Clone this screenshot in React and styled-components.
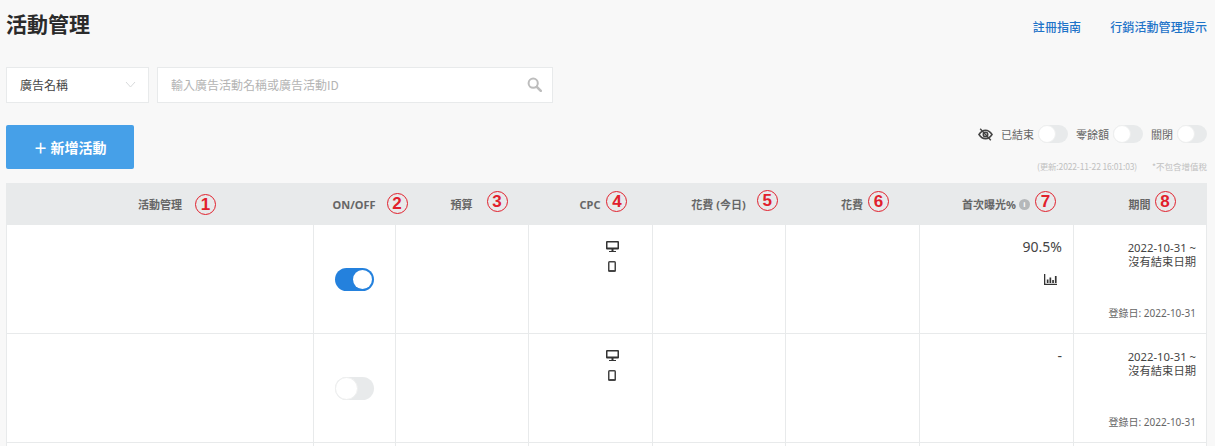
import React from "react";
import styled, { createGlobalStyle } from "styled-components";

const FONT = '"Noto Sans CJK TC", "Noto Sans", sans-serif';
const LATIN_FONT = '"Noto Sans", "Noto Sans CJK TC", sans-serif';
const COLUMNS = "306px 82px 133px 124px 133px 134px 154px 133px";

const columns = [
  { label: "活動管理", mark: "1", gap: 13, shift: 1 },
  { label: "ON/OFF", mark: "2", gap: 11, shift: 0 },
  { label: "預算", mark: "3", gap: 14, shift: -2 },
  { label: "CPC", mark: "4", gap: 6, shift: -2 },
  { label: "花費 (今日)", mark: "5", gap: 11, shift: -3 },
  { label: "花費", mark: "6", gap: 5, shift: -2 },
  { label: "首次曝光%", mark: "7", gap: 5, shift: -2, info: true },
  { label: "期間", mark: "8", gap: 4, shift: -2 },
];

const rows = [
  { on: true, rate: "90.5%", chart: true },
  { on: false, rate: "-", chart: false },
  { on: false, rate: "", chart: false, empty: true },
];

const Global = createGlobalStyle`
  html, body {
    margin: 0;
    height: 446px;
    overflow: hidden;
    background: #f8f8f8;
    font-family: ${FONT};
  }
`;

const Page = styled.div`
  box-sizing: border-box;
  height: 446px;
  overflow: hidden;
  display: flex;
  flex-direction: column;
  padding: 0 8px 0 6px;
`;

const TitleBar = styled.header`
  display: flex;
  justify-content: space-between;
  align-items: flex-start;
  height: 50px;
  padding-top: 8px;
  box-sizing: border-box;
`;

const Title = styled.h1`
  margin: 0;
  font-size: 21px;
  line-height: 30px;
  font-weight: 700;
  color: #2b2b2b;
`;

const Links = styled.nav`
  display: flex;
  gap: 29px;
  padding-top: 10px;
`;

const HelpLink = styled.a`
  font-size: 12px;
  line-height: 18px;
  letter-spacing: 0.1px;
  font-weight: 500;
  color: #1e73c8;
`;

const SearchBar = styled.div`
  display: flex;
  gap: 8px;
  margin-top: 17px;
`;

const Select = styled.div`
  box-sizing: border-box;
  width: 143px;
  height: 36px;
  padding: 0 12px 1px 13px;
  display: flex;
  align-items: center;
  justify-content: space-between;
  background: #fff;
  border: 1px solid #e8eaeb;
  font-size: 12px;
  color: #444;
`;

const SearchField = styled.div`
  box-sizing: border-box;
  width: 396px;
  height: 36px;
  padding: 0 10px 1px 13px;
  display: flex;
  align-items: center;
  justify-content: space-between;
  background: #fff;
  border: 1px solid #e8eaeb;
  font-size: 12px;
  color: #b4b4b4;
`;

const Actions = styled.div`
  display: flex;
  justify-content: space-between;
  margin-top: 22px;
  height: 58px;
`;

const AddButton = styled.button`
  width: 128px;
  height: 44px;
  border: 0;
  border-radius: 2px;
  background: #46a0e8;
  color: #fff;
  font-family: ${FONT};
  font-size: 14px;
  font-weight: 700;
  display: flex;
  align-items: center;
  justify-content: center;
  gap: 5px;
`;

const Filters = styled.div`
  display: flex;
  flex-direction: column;
  align-items: flex-end;
`;

const FilterRow = styled.div`
  display: flex;
  align-items: center;
  height: 18px;
  font-size: 11px;
  color: #666;
`;

const FilterLabel = styled.span`
  margin: 0 4px 0 8px;
`;

const Notes = styled.div`
  display: flex;
  gap: 15px;
  margin-top: 16px;
  font-size: 8.5px;
  line-height: 14px;
  color: #c0c0c0;
`;

const UpdatedAt = styled.span`
  letter-spacing: -0.15px;
`;

const Toggle = styled.span`
  box-sizing: border-box;
  display: inline-flex;
  align-items: center;
  justify-content: ${(p) => (p.$on ? "flex-end" : "flex-start")};
  width: ${(p) => (p.$large ? 39 : 30)}px;
  height: ${(p) => (p.$large ? 23 : 18)}px;
  padding: ${(p) => (p.$on ? "0 2px" : 0)};
  border-radius: 12px;
  background: ${(p) => (p.$on ? "#2481dd" : "#e8eaeb")};
  &::after {
    content: "";
    box-sizing: border-box;
    width: ${(p) => (p.$on ? 19 : p.$large ? 23 : 18)}px;
    height: ${(p) => (p.$on ? 19 : p.$large ? 23 : 18)}px;
    border-radius: 50%;
    background: #fff;
    border: ${(p) => (p.$on ? "none" : "1px solid #eeefef")};
  }
`;

const Table = styled.div`
  flex: 1;
  min-height: 0;
  overflow: hidden;
  border-left: 1px solid #e8eaeb;
  border-right: 1px solid #e8eaeb;
  background: #fff;
  font-family: ${LATIN_FONT};
`;

const HeadRow = styled.div`
  display: grid;
  grid-template-columns: ${COLUMNS};
  height: 42px;
  background: #e8eaeb;
`;

const HeadCell = styled.div`
  display: flex;
  align-items: center;
  justify-content: center;
  font-size: 11px;
  font-weight: 700;
  color: #666;
`;

const HeadLabel = styled.span`
  position: relative;
  display: inline-flex;
  align-items: center;
  gap: 3px;
  white-space: nowrap;
`;

/* red numbered markers drawn over the screenshot */
const Mark = styled.span`
  position: absolute;
  left: calc(100% + ${(p) => p.$gap}px);
  top: 50%;
  margin-top: ${(p) => p.$shift - 11}px;
  box-sizing: border-box;
  width: 21px;
  height: 21px;
  border: 1.5px solid #e1202c;
  border-radius: 50%;
  display: flex;
  align-items: center;
  justify-content: center;
  font-family: "Liberation Sans", sans-serif;
  font-size: 17px;
  font-weight: 700;
  color: #e1202c;
`;

const InfoDot = styled.span`
  width: 11px;
  height: 11px;
  border-radius: 50%;
  background: #b5b8ba;
  color: #fff;
  font-size: 8px;
  line-height: 11px;
  text-align: center;
  font-family: "Liberation Sans", sans-serif;
`;

const Row = styled.div`
  display: grid;
  grid-template-columns: ${COLUMNS};
  height: 109px;
  border-bottom: 1px solid #e8eaeb;
  box-sizing: border-box;
`;

const Cell = styled.div`
  box-sizing: border-box;
  border-left: ${(p) => (p.$first ? "none" : "1px solid #e8eaeb")};
`;

const SwitchCell = styled(Cell)`
  display: flex;
  justify-content: center;
  padding-top: 43px;
`;

const DeviceCell = styled(Cell)`
  display: flex;
  flex-direction: column;
  align-items: center;
  gap: 9px;
  padding: 16px 0 0 43px;
`;

const RateCell = styled(Cell)`
  display: flex;
  flex-direction: column;
  align-items: flex-end;
  padding: 12px 11px 0 0;
  font-size: 14px;
  line-height: 20px;
  color: #444;
`;

const ChartWrap = styled.span`
  display: flex;
  margin: 17px 5px 0 0;
`;

const PeriodCell = styled(Cell)`
  display: flex;
  flex-direction: column;
  align-items: flex-end;
  justify-content: space-between;
  padding: 16px 10px 13px 0;
  font-size: 11.3px;
  line-height: 14px;
  color: #444;
  text-align: right;
`;

const Registered = styled.div`
  font-size: 10px;
  color: #666;
`;

const Chevron = () => (
  <svg width="11" height="7" viewBox="0 0 11 7" fill="none" stroke="#d8dadb" strokeWidth="1">
    <path d="M1 1l4.5 5L10 1" />
  </svg>
);

const SearchIcon = () => (
  <svg width="15" height="15" viewBox="0 0 15 15" fill="none" stroke="#bdbdbd">
    <circle cx="6.2" cy="6.2" r="4.6" strokeWidth="2" />
    <path d="M9.8 9.8l4 4" strokeWidth="2.6" strokeLinecap="round" />
  </svg>
);

const EyeOffIcon = () => (
  <svg width="15" height="13" viewBox="0 0 15 13" fill="none" stroke="#444">
    <path d="M1 6.5C3 3.5 5 2.3 7.5 2.3S12 3.5 14 6.5c-2 3-4 4.2-6.5 4.2S3 9.5 1 6.5z" strokeWidth="1.6" />
    <circle cx="7.5" cy="6.5" r="2.2" strokeWidth="1.6" />
    <path d="M2.2 .8l10.6 11.4" strokeWidth="1.4" />
  </svg>
);

const DesktopIcon = () => (
  <svg width="13" height="11" viewBox="0 0 13 11">
    <path fill="#333" d="M1 0h11a1 1 0 0 1 1 1v6.5a1 1 0 0 1-1 1H7.5V10H10v1H3v-1h2.5V8.5H1a1 1 0 0 1-1-1V1a1 1 0 0 1 1-1z" />
    <path fill="#fff" d="M1.5 1.5h10v5h-10z" />
  </svg>
);

const PhoneIcon = () => (
  <svg width="8" height="11" viewBox="0 0 8 11">
    <rect width="8" height="11" rx="1.5" fill="#444" />
    <rect x="1.5" y="1.5" width="5" height="7.5" fill="#fff" />
  </svg>
);

const ChartIcon = () => (
  <svg width="13" height="11" viewBox="0 0 13 11" fill="#333">
    <path d="M0 0h1.3v9.7H13V11H0z" />
    <path d="M2.800 5.500h1.700V9H2.800zM5.500 3.500h1.700V9H5.500zM8.200 6h1.700v3H8.200zM10.900 2h1.700v7h-1.700z" />
  </svg>
);

const App = () => (
  <Page>
    <Global />
    <TitleBar>
      <Title>活動管理</Title>
      <Links>
        <HelpLink>註冊指南</HelpLink>
        <HelpLink>行銷活動管理提示</HelpLink>
      </Links>
    </TitleBar>

    <SearchBar>
      <Select>
        廣告名稱
        <Chevron />
      </Select>
      <SearchField>
        輸入廣告活動名稱或廣告活動ID
        <SearchIcon />
      </SearchField>
    </SearchBar>

    <Actions>
      <AddButton>＋ 新增活動</AddButton>
      <Filters>
        <FilterRow>
          <EyeOffIcon />
          <FilterLabel>已結束</FilterLabel>
          <Toggle />
          <FilterLabel>零餘額</FilterLabel>
          <Toggle />
          <FilterLabel>關閉</FilterLabel>
          <Toggle />
        </FilterRow>
        <Notes>
          <UpdatedAt>(更新:2022-11-22 16:01:03)</UpdatedAt>
          <span>*不包含增值稅</span>
        </Notes>
      </Filters>
    </Actions>

    <Table>
      <HeadRow>
        {columns.map((col) => (
          <HeadCell key={col.mark}>
            <HeadLabel>
              {col.label}
              {col.info && <InfoDot>i</InfoDot>}
              <Mark $gap={col.gap} $shift={col.shift}>
                {col.mark}
              </Mark>
            </HeadLabel>
          </HeadCell>
        ))}
      </HeadRow>

      {rows.map((row, i) => (
        <Row key={i}>
          <Cell $first />
          <SwitchCell>{!row.empty && <Toggle $large $on={row.on} />}</SwitchCell>
          <Cell />
          <DeviceCell>
            {!row.empty && (
              <>
                <DesktopIcon />
                <PhoneIcon />
              </>
            )}
          </DeviceCell>
          <Cell />
          <Cell />
          <RateCell>
            {row.rate}
            {row.chart && (
              <ChartWrap>
                <ChartIcon />
              </ChartWrap>
            )}
          </RateCell>
          <PeriodCell>
            {!row.empty && (
              <>
                <div>
                  2022-10-31 ~
                  <br />
                  沒有結束日期
                </div>
                <Registered>登錄日: 2022-10-31</Registered>
              </>
            )}
          </PeriodCell>
        </Row>
      ))}
    </Table>
  </Page>
);

export default App;
